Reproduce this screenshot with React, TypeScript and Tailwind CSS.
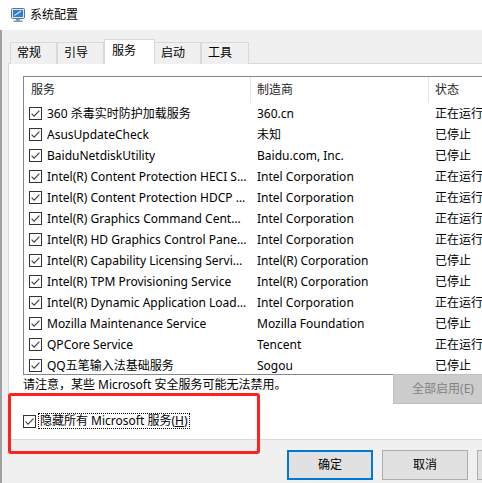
import React from "react";

interface Service {
  name: string;
  maker: string;
  status: string;
}

const services: Service[] = [
  { name: "360 杀毒实时防护加载服务", maker: "360.cn", status: "正在运行" },
  { name: "AsusUpdateCheck", maker: "未知", status: "已停止" },
  { name: "BaiduNetdiskUtility", maker: "Baidu.com, Inc.", status: "已停止" },
  { name: "Intel(R) Content Protection HECI Service", maker: "Intel Corporation", status: "正在运行" },
  { name: "Intel(R) Content Protection HDCP Service", maker: "Intel Corporation", status: "正在运行" },
  { name: "Intel(R) Graphics Command Center Service", maker: "Intel Corporation", status: "正在运行" },
  { name: "Intel(R) HD Graphics Control Panel Service", maker: "Intel Corporation", status: "正在运行" },
  { name: "Intel(R) Capability Licensing Service TCP IP Interface", maker: "Intel(R) Corporation", status: "已停止" },
  { name: "Intel(R) TPM Provisioning Service", maker: "Intel(R) Corporation", status: "已停止" },
  { name: "Intel(R) Dynamic Application Loader Host Interface Service", maker: "Intel Corporation", status: "正在运行" },
  { name: "Mozilla Maintenance Service", maker: "Mozilla Foundation", status: "已停止" },
  { name: "QPCore Service", maker: "Tencent", status: "正在运行" },
  { name: "QQ五笔输入法基础服务", maker: "Sogou", status: "已停止" },
];

const tabs = [
  { label: "常规", w: "w-[47px]", edge: "border-l" },
  { label: "引导", w: "w-[47px]", edge: "border-l" },
  { label: "服务", w: "w-[51px]", active: true },
  { label: "启动", w: "w-[46px]", edge: "" },
  { label: "工具", w: "w-[48px]", edge: "border-l" },
];

const CheckBox = () => (
  <svg width="13" height="13" viewBox="0 0 13 13" className="shrink-0">
    <rect x="0.5" y="0.5" width="12" height="12" fill="#fff" stroke="#333" />
    <path d="M2.6 6.6 L5.1 9.1 L10.4 3.6" fill="none" stroke="#444" strokeWidth="1.2" />
  </svg>
);

const AppIcon = () => (
  <svg width="16" height="16" viewBox="0 0 16 16">
    <rect x="1.5" y="1.5" width="13" height="10" rx="1" fill="#dfe6f0" stroke="#5f7393" />
    <rect x="3" y="3" width="10" height="7" fill="#2f7fd8" />
    <path d="M4.5 8.5 L11 4" stroke="#cfe6ff" strokeWidth="1.2" />
    <path d="M6 12 h4 v1.5 h2.5 v1.5 h-9 v-1.5 h2.5 z" fill="#8a99b0" />
  </svg>
);

export default function App() {
  return (
    <div className="w-[482px] h-[483px] overflow-hidden relative bg-[#f0f0f0] text-black text-[12px] font-['Noto_Sans','Noto_Sans_CJK_SC',sans-serif]">
      {/* title bar */}
      <div className="h-[30px] bg-white flex items-center pl-[10px] gap-[4px]">
        <AppIcon />
        <span className="leading-none">系统配置</span>
      </div>

      <div className="border-l-2 border-[#a0a0a0] h-[453px]">
        {/* tabs */}
        <div className="h-[34px] flex items-end pl-[8px]">
          {tabs.map((t) =>
            t.active ? (
              <div
                key={t.label}
                className={`${t.w} h-[25px] shrink-0 relative z-10 bg-white border border-b-0 border-[#d9d9d9] pl-[7px] pt-[2px] leading-[18px]`}
              >
                {t.label}
              </div>
            ) : (
              <div
                key={t.label}
                className={`${t.w} ${t.edge} h-[22px] shrink-0 bg-[#f0f0f0] border-t border-r border-[#d9d9d9] pl-[6px] leading-[20px]`}
              >
                {t.label}
              </div>
            )
          )}
        </div>

        {/* tab page */}
        <div className="-mt-px ml-[6px] h-[377px] bg-white border border-r-0 border-[#d9d9d9] pl-[14px] pt-[12px]">
          <div className="w-[560px] h-[299px] border border-[#828790] overflow-hidden">
            <div className="h-[26px] flex items-center text-[#262626]">
              <div className="w-[226px] pl-[7px] h-full flex items-center">服务</div>
              <div className="w-[178px] pl-[6px] h-full flex items-center border-l border-[#e5e5e5]">制造商</div>
              <div className="flex-1 pl-[6px] h-full flex items-center border-l border-[#e5e5e5]">状态</div>
            </div>
            {services.map((s) => (
              <div key={s.name} className="h-[21px] flex items-center">
                <div className="w-[226px] shrink-0 pl-[5px] pr-[3px] flex items-center gap-[5px]">
                  <CheckBox />
                  <span className="truncate">{s.name}</span>
                </div>
                <div className="w-[178px] shrink-0 pl-[7px] truncate">{s.maker}</div>
                <div className="flex-1 pl-[7px] whitespace-nowrap">{s.status}</div>
              </div>
            ))}
          </div>

          <div className="flex items-start">
            <div className="w-[370px] shrink-0 pt-[1px] leading-[18px]">
              请注意，某些 Microsoft 安全服务可能无法禁用。
            </div>
            <button
              disabled
              className="-mt-px w-[100px] h-[30px] shrink-0 bg-[#cccccc] border border-[#bfbfbf] text-[#838383]"
            >
              全部启用(E)
            </button>
          </div>

          <div className="mt-[9px] flex items-center h-[16px]">
            <CheckBox />
            <span className="ml-[2px] h-[16px] px-[1px] leading-[14px] border border-dotted border-black">
              隐藏所有 Microsoft 服务(<span className="underline">H</span>)
            </span>
          </div>
        </div>

        {/* dialog buttons */}
        <div className="flex gap-[9px] pl-[285px] pt-[10px]">
          <button className="w-[86px] h-[30px] shrink-0 bg-[#e1e1e1] border-2 border-[#0078d7]">确定</button>
          <button className="w-[86px] h-[30px] shrink-0 bg-[#e1e1e1] border border-[#adadad]">取消</button>
          <button className="w-[86px] h-[30px] shrink-0 bg-[#e1e1e1] border border-[#adadad]">应用(A)</button>
        </div>
      </div>

      {/* highlight box */}
      <div className="absolute left-[8px] top-[393px] w-[252px] h-[61px] border-[3px] border-[#ff2020] rounded-[3px]" />
    </div>
  );
}
